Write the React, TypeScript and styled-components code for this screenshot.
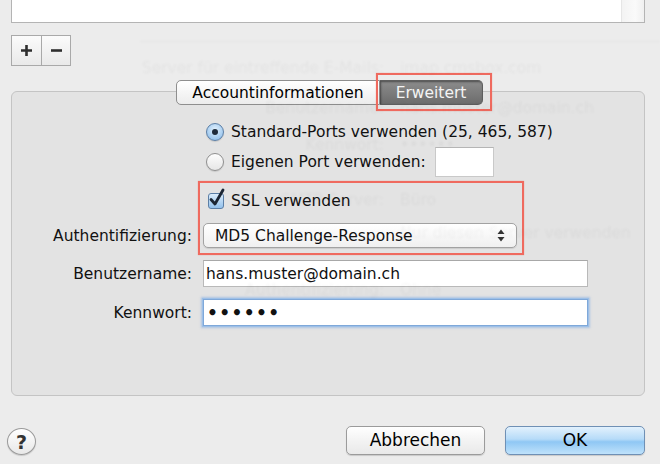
import React from "react"
import styled, { createGlobalStyle, css } from "styled-components"

const GlobalStyle = createGlobalStyle`
	html, body {
		margin: 0;
		padding: 0;
		background: #ececec;
	}
	body {
		font-family: "DejaVu Sans", "Liberation Sans", sans-serif;
		font-size: 15.5px;
		color: #111;
	}
`

const Window = styled.div`
	position: relative;
	width: 660px;
	height: 464px;
	overflow: hidden;
	display: flex;
	flex-direction: column;
	background: #ececec;
`

const ListBox = styled.div`
	margin: 0 15px 0 11px;
	height: 22px;
	display: flex;
	background: #fff;
	border: 1px solid #b4b4b4;
	border-top: none;
`

const ListBody = styled.div`
	flex: 1;
`

const ScrollTrack = styled.div`
	width: 22px;
	border-left: 1px solid #e6e6e6;
	background: linear-gradient(to right, #f3f3f3, #fafafa 60%, #f0f0f0);
`

const PlusMinus = styled.div`
	margin: 12px 0 0 11px;
	display: flex;
	align-self: flex-start;
	border: 1px solid #a9a9a9;
`

const SmallButton = styled.button`
	width: 29px;
	height: 29px;
	padding: 0;
	border: none;
	background: linear-gradient(#fbfbfb, #e9e9e9);
	display: flex;
	align-items: center;
	justify-content: center;
	& + & {
		border-left: 1px solid #a9a9a9;
	}
`

const Panel = styled.div`
	margin: 25px 15px 0 11px;
	height: 303px;
	border: 1px solid #c4c4c4;
	border-radius: 6px;
	background: #e3e3e3;
	display: flex;
	flex-direction: column;
`

const TabBar = styled.div`
	margin: -12px 0 0 164px;
	display: flex;
	align-self: flex-start;
	position: relative;
`

const Tab = styled.div<{ $active?: boolean; $first?: boolean }>`
	height: 23px;
	display: flex;
	align-items: center;
	justify-content: center;
	font-size: 15.5px;
	border: 1px solid #8e8e8e;
	${(p) =>
		p.$first
			? css`
					width: 202px;
					border-radius: 5px 0 0 5px;
			  `
			: css`
					width: 102px;
					border-left: none;
					border-radius: 0 5px 5px 0;
			  `}
	${(p) =>
		p.$active
			? css`
					color: #f4f4f4;
					background: linear-gradient(#8c8c8c, #6c6c6c);
					box-shadow: inset 1px 1px 2px rgba(0, 0, 0, 0.45);
					border-color: #5e5e5e;
			  `
			: css`
					color: #000;
					background: linear-gradient(#ffffff, #ececec);
			  `}
`

const Highlight = styled.div<{ $top: number; $left: number; $width: number; $height: number }>`
	position: absolute;
	top: ${(p) => p.$top}px;
	left: ${(p) => p.$left}px;
	width: ${(p) => p.$width}px;
	height: ${(p) => p.$height}px;
	box-sizing: border-box;
	border: 2px solid #ef6a5f;
	box-shadow: 0 0 1px rgba(239, 106, 95, 0.6);
	pointer-events: none;
`

const Form = styled.div`
	display: flex;
	flex-direction: column;
	padding-top: 17px;
`

const Row = styled.div<{ $height: number; $gap?: number }>`
	display: flex;
	align-items: center;
	height: ${(p) => p.$height}px;
	margin-top: ${(p) => p.$gap ?? 0}px;
`

const Label = styled.div`
	width: 180px;
	margin-right: 11px;
	text-align: right;
	white-space: nowrap;
`

const OptionLabel = styled.label`
	display: flex;
	align-items: center;
	gap: 7px;
	margin-left: 3px;
	white-space: nowrap;
`

const Radio = styled.span<{ $checked?: boolean }>`
	width: 18px;
	height: 18px;
	border-radius: 50%;
	box-sizing: border-box;
	border: 1px solid ${(p) => (p.$checked ? "#5c7fa6" : "#8f8f8f")};
	background: ${(p) =>
		p.$checked ? "radial-gradient(circle at 50% 35%, #e2f1fd, #9fc8ee 70%, #7fb3e6)" : "linear-gradient(#fdfdfd, #e6e6e6)"};
	box-shadow: 0 1px 1px rgba(0, 0, 0, 0.12);
	display: flex;
	align-items: center;
	justify-content: center;
	&::after {
		content: "";
		display: ${(p) => (p.$checked ? "block" : "none")};
		width: 6px;
		height: 6px;
		border-radius: 50%;
		background: #1d2a3a;
	}
`

const PortInput = styled.div`
	margin-left: 9px;
	width: 57px;
	height: 28px;
	background: #fff;
	border: 1px solid #c9c9c9;
	border-top-color: #b5b5b5;
`

const HighlightArea = styled.div`
	position: relative;
	margin-top: 4px;
	padding: 10px 0 8px;
	display: flex;
	flex-direction: column;
`

const CheckBox = styled.span`
	position: relative;
	width: 16px;
	height: 16px;
	box-sizing: border-box;
	border: 1px solid #5c7fa6;
	border-radius: 3px;
	background: linear-gradient(#dcedfb, #93c1ec);
	margin-left: 2px;
`

const Select = styled.div`
	width: 312px;
	height: 23px;
	box-sizing: content-box;
	border: 1px solid #a2a2a2;
	border-radius: 5px;
	background: linear-gradient(#ffffff, #f0f0f0);
	box-shadow: 0 1px 1px rgba(0, 0, 0, 0.1);
	display: flex;
	align-items: center;
	justify-content: space-between;
`

const SelectText = styled.span`
	margin-left: 11px;
	white-space: nowrap;
`

const SelectArrows = styled.svg`
	margin-right: 11px;
`

const TextInput = styled.div<{ $focused?: boolean }>`
	width: 381px;
	height: 25px;
	background: #fff;
	border: 1px solid #b9b9b9;
	border-top-color: #a8a8a8;
	display: flex;
	align-items: center;
	padding-left: 2px;
	white-space: nowrap;
	${(p) =>
		p.$focused &&
		css`
			border-color: #7fa8d9;
			box-shadow: 0 0 0 1px #9dc0e8, 0 0 2px 2px rgba(125, 170, 225, 0.55);
		`}
`

const Dots = styled.span`
	font-size: 17px;
	letter-spacing: 1.4px;
	margin-left: 1px;
	font-weight: bold;
`

const Footer = styled.div`
	margin-top: 29px;
	padding: 0 15px 0 7px;
	display: flex;
	align-items: center;
`

const HelpButton = styled.button`
	width: 29px;
	height: 27px;
	padding: 0;
	margin-top: 3px;
	border-radius: 50%;
	border: 1px solid #9a9a9a;
	background: linear-gradient(#ffffff, #e8e8e8);
	box-shadow: 0 1px 1px rgba(0, 0, 0, 0.15);
	font-family: "DejaVu Sans", sans-serif;
	font-size: 19px;
	font-weight: bold;
	color: #333;
	display: flex;
	align-items: center;
	justify-content: center;
`

const Spacer = styled.div`
	flex: 1;
`

const PushButton = styled.button<{ $primary?: boolean; $width: number }>`
	width: ${(p) => p.$width}px;
	height: 29px;
	margin-left: 20px;
	border-radius: 5px;
	font-family: "DejaVu Sans", sans-serif;
	font-size: 17px;
	color: #000;
	padding: 0;
	box-shadow: 0 1px 1px rgba(0, 0, 0, 0.15);
	${(p) =>
		p.$primary
			? css`
					border: 1px solid #6f90b5;
					background: linear-gradient(#e2f1fd, #b6dbf8 45%, #8fc7f4 55%, #bfe2fb);
			  `
			: css`
					border: 1px solid #9b9b9b;
					background: linear-gradient(#ffffff, #f3f3f3 50%, #e9e9e9);
			  `}
`

/* faint cross-fade of the previous pane, lying over the dialog */
const Ghost = styled.div`
	position: absolute;
	inset: 0;
	pointer-events: none;
	color: rgba(40, 40, 40, 0.045);
	filter: blur(0.9px);
	display: flex;
	flex-direction: column;
`

const GhostRow = styled.div<{ $gap: number }>`
	display: flex;
	height: 20px;
	align-items: center;
	margin-top: ${(p) => p.$gap}px;
	white-space: nowrap;
`

const GhostLabel = styled.span`
	width: 384px;
	text-align: right;
	margin-right: 16px;
`

const GhostLine = styled.div`
	margin: 41px 0 0 140px;
	height: 1px;
	background: rgba(0, 0, 0, 0.035);
`

const ghostRows = [
	{ gap: 16, label: "Server für eintreffende E-Mails:", value: "imap.cmsbox.com" },
	{ gap: 20, label: "Benutzername:", value: "hans.muster@domain.ch" },
	{ gap: 17, label: "Kennwort:", value: "••••••" },
	{ gap: 35, label: "SMTP-Server:", value: "Büro" },
	{ gap: 13, label: "", value: "     Nur diesen Server verwenden" },
	{ gap: 37, label: "Authentifizierung:", value: "Ohne" },
]

export default function App() {
	return (
		<>
			<GlobalStyle />
			<Window>
				<ListBox>
					<ListBody />
					<ScrollTrack />
				</ListBox>

				<PlusMinus>
					<SmallButton>
						<svg width="13" height="13" viewBox="0 0 13 13">
							<path d="M6.5 1v11M1 6.5h11" stroke="#2e2e2e" strokeWidth="2.6" />
						</svg>
					</SmallButton>
					<SmallButton>
						<svg width="13" height="13" viewBox="0 0 13 13">
							<path d="M1 6.5h11" stroke="#2e2e2e" strokeWidth="2.6" />
						</svg>
					</SmallButton>
				</PlusMinus>

				<Panel>
					<TabBar>
						<Tab $first>Accountinformationen</Tab>
						<Tab $active>Erweitert</Tab>
						<Highlight $top={-7} $left={200} $width={116} $height={38} />
					</TabBar>

					<Form>
						<Row $height={19}>
							<Label />
							<OptionLabel>
								<Radio $checked />
								Standard-Ports verwenden (25, 465, 587)
							</OptionLabel>
						</Row>
						<Row $height={30} $gap={6}>
							<Label />
							<OptionLabel>
								<Radio />
								Eigenen Port verwenden:
							</OptionLabel>
							<PortInput />
						</Row>

						<HighlightArea>
							<Row $height={20}>
								<Label />
								<OptionLabel>
									<CheckBox>
										<svg
											width="18"
											height="20"
											viewBox="0 0 18 20"
											style={{ position: "absolute", left: -1, top: -6 }}
										>
											<path
												d="M3 11.5 L7 16 L15 2"
												fill="none"
												stroke="#1c2634"
												strokeWidth="2.8"
												strokeLinecap="round"
												strokeLinejoin="round"
											/>
										</svg>
									</CheckBox>
									SSL verwenden
								</OptionLabel>
							</Row>
							<Row $height={25} $gap={12}>
								<Label>Authentifizierung:</Label>
								<Select>
									<SelectText>MD5 Challenge-Response</SelectText>
									<SelectArrows width="8" height="13" viewBox="0 0 8 13">
										<path d="M4 0.5 L7.5 5 H0.5 Z M4 12.5 L7.5 8 H0.5 Z" fill="#333" />
									</SelectArrows>
								</Select>
							</Row>
							<Highlight $top={0} $left={186} $width={326} $height={74} />
						</HighlightArea>

						<Row $height={27} $gap={4}>
							<Label>Benutzername:</Label>
							<TextInput>hans.muster@domain.ch</TextInput>
						</Row>
						<Row $height={27} $gap={12}>
							<Label>Kennwort:</Label>
							<TextInput $focused>
								<Dots>••••••</Dots>
							</TextInput>
						</Row>
					</Form>
				</Panel>

				<Footer>
					<HelpButton>?</HelpButton>
					<Spacer />
					<PushButton $width={139}>Abbrechen</PushButton>
					<PushButton $primary $width={140}>
						OK
					</PushButton>
				</Footer>

				<Ghost>
					<GhostLine />
					{ghostRows.map((r, i) => (
						<GhostRow key={i} $gap={r.gap}>
							<GhostLabel>{r.label}</GhostLabel>
							{r.value}
						</GhostRow>
					))}
				</Ghost>
			</Window>
		</>
	)
}
